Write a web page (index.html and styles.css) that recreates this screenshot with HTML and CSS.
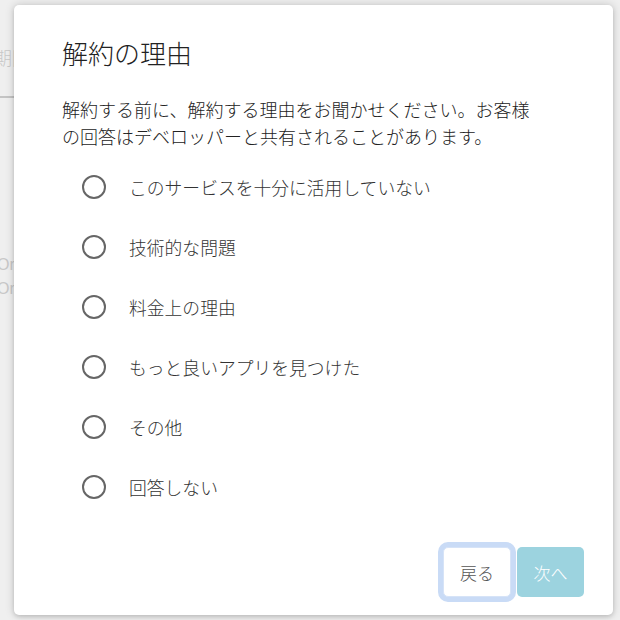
FILE: index.html
```html
<!DOCTYPE html>
<html lang="ja">
<head>
<meta charset="utf-8">
<link rel="stylesheet" href="styles.css">
</head>
<body>
<div class="page">
  <div class="page-title">期間</div>
  <div class="page-rule"></div>
  <div class="page-lines">
    <div>On</div>
    <div>On</div>
  </div>
</div>
<div class="dialog" role="dialog">
  <h1 class="title">解約の理由</h1>
  <p class="desc">解約する前に、解約する理由をお聞かせください。お客様の回答はデベロッパーと共有されることがあります。</p>
  <ul class="options">
    <li class="option"><span class="radio"></span><span class="label">このサービスを十分に活用していない</span></li>
    <li class="option"><span class="radio"></span><span class="label">技術的な問題</span></li>
    <li class="option"><span class="radio"></span><span class="label">料金上の理由</span></li>
    <li class="option"><span class="radio"></span><span class="label">もっと良いアプリを見つけた</span></li>
    <li class="option"><span class="radio"></span><span class="label">その他</span></li>
    <li class="option"><span class="radio"></span><span class="label">回答しない</span></li>
  </ul>
  <div class="actions">
    <button class="btn btn-back">戻る</button>
    <button class="btn btn-next">次へ</button>
  </div>
</div>
</body>
</html>
```
FILE: styles.css
```css
html, body {
  margin: 0;
  padding: 0;
  width: 620px;
  height: 620px;
  overflow: hidden;
}
body {
  background: #efefef;
  font-family: "Noto Sans CJK JP", "Noto Sans", sans-serif;
  position: relative;
}
.page {
  padding-top: 42px;
  color: #c8c8c8;
}
.page-title {
  font-size: 18px;
  line-height: 30px;
  margin-left: -6px;
  font-weight: 300;
}
.page-rule {
  margin-top: 24px;
  height: 2px;
  background: #c4c4c4;
  width: 30px;
}
.page-lines {
  margin-top: 155px;
  margin-left: -3px;
  font-family: "Liberation Sans", sans-serif;
  font-size: 16px;
  line-height: 24px;
}
.dialog {
  position: absolute;
  left: 14px;
  top: 5px;
  width: 599px;
  height: 610px;
  box-sizing: border-box;
  background: #fff;
  border-radius: 5px;
  box-shadow: 0 0 10px rgba(0,0,0,0.18), 0 2px 4px rgba(0,0,0,0.12);
  padding: 30px 29px 18px 48px;
  display: flex;
  flex-direction: column;
}
.title {
  margin: 0;
  font-size: 26px;
  line-height: 36px;
  font-weight: 300;
  color: #222;
}
.desc {
  margin: 25px 0 0;
  font-size: 18px;
  line-height: 27px;
  font-weight: 300;
  color: #222;
  width: 474px;
}
.options {
  list-style: none;
  margin: 7px 0 0;
  padding: 0 0 0 20px;
}
.option {
  height: 60px;
  display: flex;
  align-items: center;
  gap: 23px;
}
.radio {
  width: 24px;
  height: 24px;
  box-sizing: border-box;
  border: 2px solid #666;
  border-radius: 50%;
  flex: none;
}
.label {
  font-size: 17.8px;
  font-weight: 300;
  color: #333;
}
.actions {
  margin-top: auto;
  display: flex;
  justify-content: flex-end;
  gap: 6px;
}
.btn {
  height: 50px;
  border-radius: 5px;
  font-family: inherit;
  font-size: 17px;
  font-weight: 300;
  padding: 0;
  border: none;
}
.btn-back {
  width: 68px;
  background: #fff;
  color: #555;
  border: 1px solid #d6e3f7;
  box-shadow: 0 0 0 5px #c9dbf6;
}
.btn-next {
  width: 67px;
  background: #9cd3df;
  color: #fff;
}
```
